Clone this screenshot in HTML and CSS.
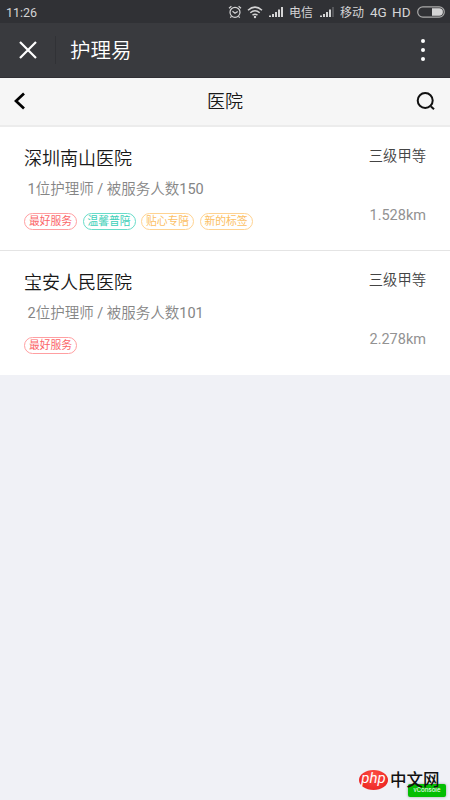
FILE: index.html
```html
<!DOCTYPE html>
<html lang="zh-CN">
<head>
<meta charset="utf-8">
<meta name="viewport" content="width=device-width, initial-scale=1">
<title>护理易</title>
<link rel="stylesheet" href="styles.css">
</head>
<body>
<div class="status">
  <span class="time">11:26</span>
  <svg class="alarm" width="14" height="14" viewBox="0 0 14 14"><circle cx="7" cy="7.3" r="5"/><path d="m4.500 6.300 2.500 2 2.700-1.700M1 3.3 3.4 1.2M13 3.3 10.6 1.2M3.5 11.3 2.3 12.7M10.5 11.3l1.2 1.4"/></svg>
  <svg class="wifi" width="16" height="14" viewBox="0 0 16 14"><path d="M1 5.2Q8-1 15 5.2M3.3 7.8q4.7-4 9.4 0M5.5 10.2q2.5-2 5 0"/><circle cx="8" cy="12" r="1.2"/></svg>
  <svg class="signal" width="15" height="12" viewBox="0 0 15 12"><path d="M0 9.500h2v1.500H0zM3 8h2v3H3zM6 6h2v5H6zM9 3.500h2v7.500H9zM12 1h2v10h-2z"/></svg>
  <span class="carrier">电信</span>
  <svg class="signal second" width="15" height="12" viewBox="0 0 15 12"><path d="M0 9.500h2v1.500H0zM3 8h2v3H3zM6 6h2v5H6zM9 3.500h2v7.500H9z"/><path class="dim" d="M12 1h2v10h-2z"/></svg>
  <span class="carrier mobile">移动</span>
  <span class="network">4G</span>
  <span class="hd">HD</span>
  <svg class="battery" width="28" height="12" viewBox="0 0 28 12"><rect class="shell" x=".7" y=".9" width="26.600" height="10.200" rx="5.100"/><path d="M15 2.300h7.200a3.700 3.700 0 0 1 0 7.400H15z"/></svg>
</div>
<div class="navbar">
  <svg class="close" width="20" height="20" viewBox="0 0 20 20"><path d="m2 2 16 16M18 2 2 18"/></svg>
  <span class="divider"></span>
  <span class="app-name">护理易</span>
  <span class="more"><i></i><i></i><i></i></span>
</div>
<header class="header">
  <svg class="back" width="14" height="20" viewBox="0 0 14 20"><path d="M11 2.500 3 10l8 7.500"/></svg>
  <h1>医院</h1>
  <svg class="search" width="20" height="20" viewBox="0 0 20 20"><circle cx="9.200" cy="9.500" r="7.500"/><path d="m15 15.500 3 2.700"/></svg>
</header>
<main>
  <article class="card">
    <div class="info">
      <h2>深圳南山医院</h2>
      <p><b>1</b>位护理师 <b>/</b> 被服务人数<b>150</b></p>
      <div class="tags"><span class="tag red">最好服务</span><span class="tag teal">温馨普陪</span><span class="tag amber">贴心专陪</span><span class="tag amber">新的标签</span></div>
    </div>
    <div class="side"><span class="level">三级甲等</span><span class="distance">1.528km</span></div>
  </article>
  <article class="card">
    <div class="info">
      <h2>宝安人民医院</h2>
      <p><b>2</b>位护理师 <b>/</b> 被服务人数<b>101</b></p>
      <div class="tags"><span class="tag red">最好服务</span></div>
    </div>
    <div class="side"><span class="level">三级甲等</span><span class="distance">2.278km</span></div>
  </article>
</main>
<div class="console">vConsole</div>
<div class="brand"><span class="php">php</span><span class="site">中文网</span></div>
</body>
</html>
```
FILE: styles.css
```css
* { box-sizing: border-box; }
body {
  margin: 0;
  height: 800px;
  overflow: hidden;
  background: #f0f1f6;
  color: #181818;
  font-family: Roboto, "Noto Sans CJK SC", sans-serif;
  font-weight: 400;
}
svg { display: block; flex: none; fill: none; }
h1, h2, p { margin: 0; font-weight: 350; }
b { font-weight: 400; }

.status {
  display: flex;
  align-items: center;
  height: 23px;
  padding: 1px 5px 0 6px;
  background: #303135;
  color: #d4d4d5;
  font-size: 12.5px;
  white-space: nowrap;
}
.time { width: 222px; }
.alarm, .wifi { margin-top: -1px; stroke: #d4d4d5; stroke-width: 1.2; }
.wifi { margin-left: 5px; stroke-width: 1.5; }
.wifi circle { fill: #d4d4d5; stroke: none; }
.signal { margin-left: 6px; fill: #d4d4d5; }
.signal .dim { fill: #55565a; }
.signal.second { margin-left: 7px; }
.carrier { width: 24px; margin-left: 5px; padding-top: 1px; font-size: 12px; line-height: 20px; }
.network { width: 18px; margin-left: 6px; font-size: 13.5px; }
.hd { width: 19px; margin-left: 4px; font-size: 13.5px; }
.battery { margin-left: auto; fill: #d4d4d5; }
.battery .shell { fill: none; stroke: #aaa; stroke-width: 1.2; }

.navbar {
  display: flex;
  align-items: center;
  height: 55px;
  padding: 0 25.500px 0 17.500px;
  border-bottom: 1px solid #302f34;
  background: #393a3e;
  color: #fff;
}
.close { stroke: #fff; stroke-width: 2.2; }
.divider { width: 1px; height: 28px; margin: 0 14.500px 0 17px; background: #313236; }
.app-name { padding-top: 2px; font-size: 20.5px; line-height: 30px; font-weight: 350; }
.more { display: flex; flex-direction: column; gap: 5px; margin-left: auto; }
.more i { width: 4px; height: 4px; border-radius: 50%; background: #fff; }

.header {
  display: flex;
  align-items: center;
  justify-content: space-between;
  height: 49px;
  padding: 0 14px 1px 13px;
  border-bottom: 2px solid #ececec;
  background: #f6f6f6;
}
.header h1 { padding: 2px 0 0 7px; font-size: 18px; line-height: 26px; }
.back { stroke: #000; stroke-width: 2.7; }
.search { stroke: #111; stroke-width: 2; }

.card {
  display: flex;
  justify-content: space-between;
  height: 124px;
  padding: 16px 24px 0;
  border-bottom: 1px solid #e4e4e4;
  background: #fff;
}
.card:last-child { border-bottom: 0; }
.card h2 { padding-top: 2px; font-size: 18px; line-height: 28px; }
.card p { margin-top: 5px; padding-left: 3.500px; color: #858585; font-size: 14.5px; line-height: 24px; }
.tags { display: flex; gap: 5.500px; margin-top: 11px; }
.tag {
  width: 53px;
  height: 17px;
  border: 1px solid;
  border-radius: 9px;
  font-size: 10.8px;
  line-height: 15px;
  text-align: center;
  white-space: nowrap;
}
.red { border-color: #ff9fa1; color: #fb6669; }
.teal { border-color: #68dcc9; color: #3ccfb8; }
.amber { border-color: #ffd391; color: #fcc063; }
.side { display: flex; flex-direction: column; align-items: flex-end; }
.level { color: #444; font-size: 14.3px; line-height: 26px; font-weight: 350; }
.distance { margin-top: 35px; color: #929292; font-size: 14.5px; line-height: 24px; }

.console {
  position: absolute;
  right: 4px;
  bottom: 3px;
  width: 38px;
  height: 13px;
  border-radius: 2px;
  background: #04be02;
  box-shadow: 0 0 3px #0005;
  color: #fff;
  font-size: 6.500px;
  line-height: 13px;
  text-align: center;
}
.brand { position: absolute; left: 359px; top: 770px; display: flex; align-items: center; height: 20px; }
.php {
  width: 29px;
  height: 20px;
  border-radius: 50%;
  background: radial-gradient(ellipse at 50% 30%, #ff5146, #e71919);
  color: #fff;
  font: italic 400 15px/17px Roboto, sans-serif;
  text-align: center;
}
.site { margin-left: 2px; padding-top: 2px; color: #111; font-size: 16.500px; font-weight: 500; line-height: 20px; white-space: nowrap; }
```
